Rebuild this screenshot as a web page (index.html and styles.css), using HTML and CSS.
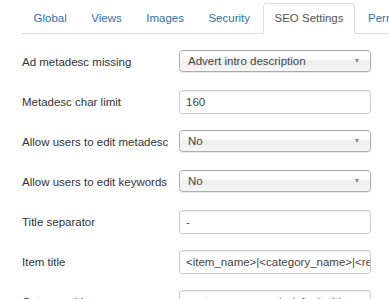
FILE: index.html
```html
<!DOCTYPE html>
<html>
<head>
<meta charset="utf-8">
<link rel="stylesheet" href="styles.css">
</head>
<body>
<div class="page">
  <ul class="tabs">
    <li><a>Global</a></li>
    <li><a>Views</a></li>
    <li><a>Images</a></li>
    <li><a>Security</a></li>
    <li class="active"><a>SEO Settings</a></li>
    <li><a>Permissions</a></li>
  </ul>
  <div class="form">
    <div class="row">
      <label class="lbl">Ad metadesc missing</label>
      <div class="select"><span>Advert intro description</span><b class="arrow"></b></div>
    </div>
    <div class="row">
      <label class="lbl">Metadesc char limit</label>
      <div class="input">160</div>
    </div>
    <div class="row">
      <label class="lbl">Allow users to edit metadesc</label>
      <div class="select"><span>No</span><b class="arrow"></b></div>
    </div>
    <div class="row">
      <label class="lbl">Allow users to edit keywords</label>
      <div class="select"><span>No</span><b class="arrow"></b></div>
    </div>
    <div class="row">
      <label class="lbl">Title separator</label>
      <div class="input">-</div>
    </div>
    <div class="row">
      <label class="lbl">Item title</label>
      <div class="input">&lt;item_name&gt;|&lt;category_name&gt;|&lt;region_name&gt;</div>
    </div>
    <div class="row">
      <label class="lbl">Category title</label>
      <div class="input">&lt;category_name&gt;|&lt;default_title&gt;</div>
    </div>
  </div>
</div>
</body>
</html>
```
FILE: styles.css
```css
html, body {
  margin: 0;
  padding: 0;
  overflow: hidden;
  background: #fff;
}
body {
  font-family: "Liberation Sans", Arial, sans-serif;
  font-size: 11.5px;
  color: #333;
}
.page {
  padding-left: 22px;
}
.tabs {
  display: flex;
  list-style: none;
  margin: 3px 0 0 0;
  padding: 0;
  border-bottom: 1px solid #ddd;
  white-space: nowrap;
}
.tabs li {
  margin-bottom: -1px;
  flex: none;
}
.tabs a {
  display: block;
  padding: 7px 10.5px;
  line-height: 15px;
  border: 1px solid transparent;
  border-radius: 4px 4px 0 0;
  margin-right: 1.5px;
  color: #3071a9;
}
.tabs .active a {
  background: #fff;
  border-color: #ddd #ddd transparent;
  color: #555;
}
.form {
  margin-top: 16px;
}
.row {
  display: grid;
  grid-template-columns: 157px 192px;
  height: 40px;
  align-items: start;
}
.lbl {
  padding-top: 4px;
  line-height: 16px;
  color: #333;
  white-space: nowrap;
}
.select {
  box-sizing: border-box;
  height: 22px;
  border: 1px solid #aaa;
  border-radius: 4px;
  background: linear-gradient(#fff 20%, #f6f6f6 50%, #eee 52%, #f4f4f4 100%);
  box-shadow: 0 0 3px #fff inset, 0 1px 1px rgba(0, 0, 0, 0.1);
  display: flex;
  align-items: center;
  justify-content: space-between;
  padding: 0 11px 0 8px;
  color: #444;
  line-height: 20px;
}
.arrow {
  width: 0;
  height: 0;
  border-left: 2.5px solid transparent;
  border-right: 2.5px solid transparent;
  border-top: 4px solid #888;
}
.input {
  box-sizing: border-box;
  height: 24px;
  border: 1px solid #ccc;
  border-radius: 3px;
  box-shadow: inset 0 1px 1px rgba(0, 0, 0, 0.075);
  padding: 0 6px;
  line-height: 22px;
  color: #444;
  white-space: nowrap;
  overflow: hidden;
}
```
